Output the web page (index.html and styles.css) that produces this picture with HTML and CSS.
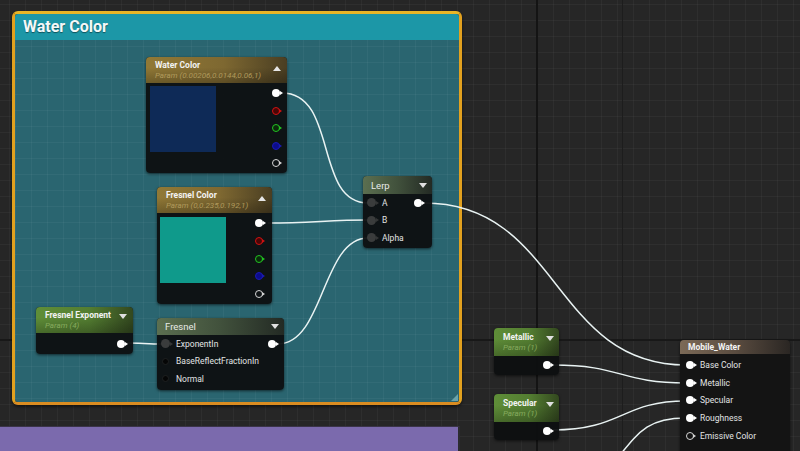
FILE: index.html
```html
<!DOCTYPE html>
<html>
<head>
<meta charset="utf-8">
<link rel="stylesheet" href="styles.css">
</head>
<body>
<div class="canvas">
  <div class="comment water-comment">
    <div class="comment-head">Water Color</div>
    <div class="comment-body"><span class="grip"></span></div>
  </div>
  <div class="comment purple-comment"></div>

  <svg class="wires" width="800" height="451" viewBox="0 0 800 451">
    <g fill="none" stroke="#e9f3f3" stroke-width="1.5">
      <path d="M282 93 C338 93 314 203 368 203"/>
      <path d="M268 223 C310 223 330 220 368 220"/>
      <path d="M278 344 C324 344 322 238 368 238"/>
      <path d="M127 343 C140 343 148 344 162 344"/>
      <path d="M424 203 C560 203 552 365 686 365"/>
      <path d="M553 365 C622 365 620 383 686 383"/>
      <path d="M553 430 C622 430 622 401 686 401"/>
      <path d="M620 455 C640 430 650 418 686 418"/>
    </g>
  </svg>

  <div class="node n-water">
    <div class="head head-gold tall">
      <div class="titles">
        <div class="title">Water Color</div>
        <div class="sub sub-gold">Param (0.00206,0.0144,0.06,1)</div>
      </div>
      <span class="tri up"></span>
    </div>
    <div class="body vec-body">
      <div class="swatch sw-blue"></div>
      <div class="pin-col">
        <span class="pin white"></span>
        <span class="pin red"></span>
        <span class="pin green"></span>
        <span class="pin blue"></span>
        <span class="pin grey"></span>
      </div>
    </div>
  </div>

  <div class="node n-fcolor">
    <div class="head head-gold tall">
      <div class="titles">
        <div class="title">Fresnel Color</div>
        <div class="sub sub-gold">Param (0,0.235,0.192,1)</div>
      </div>
      <span class="tri up"></span>
    </div>
    <div class="body vec-body">
      <div class="swatch sw-teal"></div>
      <div class="pin-col">
        <span class="pin white"></span>
        <span class="pin red"></span>
        <span class="pin green"></span>
        <span class="pin blue"></span>
        <span class="pin grey"></span>
      </div>
    </div>
  </div>

  <div class="node n-lerp">
    <div class="head head-func">
      <span class="fname">Lerp</span>
      <span class="tri down"></span>
    </div>
    <div class="body rows">
      <div class="row"><span class="pin in"></span><span class="label">A</span><span class="pin white out"></span></div>
      <div class="row"><span class="pin in"></span><span class="label">B</span></div>
      <div class="row"><span class="pin in"></span><span class="label">Alpha</span></div>
    </div>
  </div>

  <div class="node n-fexp">
    <div class="head head-green tall">
      <div class="titles">
        <div class="title">Fresnel Exponent</div>
        <div class="sub sub-green">Param (4)</div>
      </div>
      <span class="tri down"></span>
    </div>
    <div class="body out-body"><span class="pin white"></span></div>
  </div>

  <div class="node n-fresnel">
    <div class="head head-func">
      <span class="fname">Fresnel</span>
      <span class="tri down"></span>
    </div>
    <div class="body rows">
      <div class="row"><span class="pin in"></span><span class="label">ExponentIn</span><span class="pin white out"></span></div>
      <div class="row"><span class="pin dot"></span><span class="label">BaseReflectFractionIn</span></div>
      <div class="row"><span class="pin dot"></span><span class="label">Normal</span></div>
    </div>
  </div>

  <div class="node n-metal">
    <div class="head head-green taller">
      <div class="titles">
        <div class="title">Metallic</div>
        <div class="sub sub-green">Param (1)</div>
      </div>
      <span class="tri down"></span>
    </div>
    <div class="body out-body short"><span class="pin white"></span></div>
  </div>

  <div class="node n-spec">
    <div class="head head-green taller">
      <div class="titles">
        <div class="title">Specular</div>
        <div class="sub sub-green">Param (1)</div>
      </div>
      <span class="tri down"></span>
    </div>
    <div class="body out-body short"><span class="pin white"></span></div>
  </div>

  <div class="node n-result">
    <div class="head head-result">
      <span class="title">Mobile_Water</span>
    </div>
    <div class="body rows result-rows">
      <div class="row"><span class="pin white"></span><span class="label">Base Color</span></div>
      <div class="row"><span class="pin white"></span><span class="label">Metallic</span></div>
      <div class="row"><span class="pin white"></span><span class="label">Specular</span></div>
      <div class="row"><span class="pin white"></span><span class="label">Roughness</span></div>
      <div class="row"><span class="pin grey"></span><span class="label">Emissive Color</span></div>
    </div>
  </div>
</div>
</body>
</html>
```

FILE: styles.css
```css
html, body {
  margin: 0;
  padding: 0;
  background: #262626;
}
body {
  width: 800px;
  height: 451px;
  overflow: hidden;
  font-family: Roboto, "Noto Sans", "Liberation Sans", sans-serif;
}
.canvas {
  position: relative;
  width: 800px;
  height: 451px;
  overflow: hidden;
  background-color: #262626;
  background-image:
    linear-gradient(to right, transparent 536px, #141414 536px, #141414 538px, transparent 538px),
    linear-gradient(to bottom, transparent 339px, #181818 339px, #181818 341px, transparent 341px),
    linear-gradient(to right, transparent 622px, #1d1d1d 622px, #1d1d1d 623px, transparent 623px),
    linear-gradient(to right, rgba(255,255,255,0.035) 1px, transparent 1px),
    linear-gradient(to bottom, rgba(255,255,255,0.035) 1px, transparent 1px);
  background-size: 800px 451px, 800px 451px, 800px 451px, 16px 16px, 16px 16px;
  background-position: 0 0, 0 0, 0 0, 9px 0, 0 4px;
  background-repeat: no-repeat, no-repeat, no-repeat, repeat, repeat;
}

/* comments */
.comment {
  position: absolute;
  box-sizing: border-box;
}
.water-comment {
  left: 12px;
  top: 11px;
  width: 450px;
  height: 394px;
  border: 3px solid #e2a11f;
  border-top-color: #e8b526;
  border-bottom-color: #da8c21;
  border-radius: 6px;
  display: flex;
  flex-direction: column;
  box-shadow: 0 2px 3px rgba(0,0,0,0.5);
  overflow: hidden;
}
.comment-head {
  height: 26px;
  flex: none;
  background: #1c97a7;
  color: #f4f8f8;
  font-weight: 700;
  font-size: 16px;
  line-height: 26px;
  padding-left: 8px;
  text-shadow: 0 1px 1px rgba(0,0,0,0.45);
}
.comment-body {
  flex: 1;
  position: relative;
  background-color: #2a6570;
  background-image:
    linear-gradient(to right, rgba(255,255,255,0.04) 1px, transparent 1px),
    linear-gradient(to bottom, rgba(255,255,255,0.04) 1px, transparent 1px);
  background-size: 16px 16px;
  background-position: 0 0, 0 6px;
}
.grip {
  position: absolute;
  right: 1px;
  bottom: 1px;
  width: 0;
  height: 0;
  border-left: 7px solid transparent;
  border-bottom: 7px solid #6aa3aa;
}
.purple-comment {
  left: 0;
  top: 426px;
  width: 460px;
  height: 40px;
  background: #7b6aad;
  border-top: 1px solid #3a3448;
  border-right: 2px solid #2c2c30;
}

.wires {
  position: absolute;
  left: 0;
  top: 0;
}

/* nodes */
.node {
  position: absolute;
  box-sizing: border-box;
  border-radius: 4px;
  background: rgba(13, 15, 16, 0.95);
  box-shadow: 0 1px 3px rgba(0,0,0,0.6);
  display: flex;
  flex-direction: column;
}
.head {
  display: flex;
  justify-content: space-between;
  align-items: flex-start;
  border-radius: 4px 4px 0 0;
  box-sizing: border-box;
  flex: none;
}
.head.tall {
  height: 26px;
  padding: 3px 6px 0 9px;
}
.head.taller {
  height: 28px;
  padding: 4px 5px 0 9px;
}
.head-gold {
  background: linear-gradient(to bottom, rgba(0,0,0,0) 40%, rgba(0,0,0,0.25)),
              linear-gradient(to right, #917936 0%, #7e6831 55%, #4a3e22 100%);
}
.head-green {
  background: linear-gradient(to bottom, rgba(0,0,0,0) 40%, rgba(0,0,0,0.25)),
              linear-gradient(to right, #5f8e38 0%, #537d31 55%, #33481f 100%);
}
.head-func {
  height: 18px;
  padding: 0 5px 0 8px;
  align-items: center;
  background: linear-gradient(to right, #5b6f50 0%, #41513c 50%, #232a24 100%);
}
.head-result {
  height: 14px;
  padding: 0 8px;
  align-items: center;
  background: linear-gradient(to right, #7c6a57 0%, #5a4c40 50%, #2a2623 100%);
}
.titles {
  display: flex;
  flex-direction: column;
}
.title {
  font-weight: 700;
  font-size: 8.5px;
  line-height: 11px;
  color: #f3f3f3;
  white-space: nowrap;
}
.sub {
  font-size: 8px;
  line-height: 10px;
  font-style: italic;
  white-space: nowrap;
}
.sub-gold { color: #b09a5c; }
.sub-green { color: #86ab5e; }
.fname {
  font-size: 9.5px;
  color: #e8eae6;
}
.tri {
  width: 0;
  height: 0;
  border-left: 4px solid transparent;
  border-right: 4px solid transparent;
  flex: none;
}
.tri.up {
  border-bottom: 5px solid #e6e6e6;
  margin-top: 6px;
}
.tri.down {
  border-top: 5px solid #e0e0e0;
  margin-top: 4px;
}
.head-func .tri.down { margin-top: 0; }

.body {
  flex: 1;
  border-radius: 0 0 4px 4px;
}

/* vector param */
.vec-body {
  display: flex;
  justify-content: space-between;
  align-items: flex-start;
  padding: 3px 7px 0 4px;
}
.n-fcolor .vec-body { padding: 4px 9px 0 3px; }
.swatch {
  width: 66px;
  height: 66px;
}
.sw-blue { background: #0e2a57; }
.sw-teal { background: #0f9a8b; }
.pin-col {
  display: flex;
  flex-direction: column;
  gap: 9.5px;
  padding-top: 3px;
}
.n-fcolor .pin-col { padding-top: 2px; gap: 9.75px; }

/* pins */
.pin {
  position: relative;
  display: block;
  width: 8px;
  height: 8px;
  border-radius: 50%;
  box-sizing: border-box;
  flex: none;
}
.pin::after {
  content: "";
  position: absolute;
  left: 100%;
  top: 50%;
  margin-top: -2px;
  margin-left: 0;
  border-left: 3px solid currentColor;
  border-top: 2px solid transparent;
  border-bottom: 2px solid transparent;
}
.pin.white { background: #ffffff; color: #ffffff; }
.pin.red { background: #4a0606; border: 1.5px solid #d01212; color: #d01212; }
.pin.green { background: #0b2a0b; border: 1.5px solid #22c422; color: #22c422; }
.pin.blue { background: #0c0c8c; border: 1.5px solid #1a1ab4; color: #1a1ab4; }
.pin.grey { background: transparent; border: 1.5px solid #d6d6d6; color: #d6d6d6; }
.pin.in { width: 9px; height: 9px; background: #3a3c3c; color: #343636; }
.pin.dot { width: 7px; height: 7px; margin: 0 1px; background: #050606; border: 1px solid #1e2121; color: transparent; }
.pin.dot::after { display: none; }

/* rows */
.rows {
  display: flex;
  flex-direction: column;
}
.row {
  height: 17.5px;
  display: flex;
  align-items: center;
  gap: 6px;
}
.label {
  font-size: 8.5px;
  color: #e2e4e4;
  white-space: nowrap;
}
.pin.out { margin-left: auto; }

.out-body {
  display: flex;
  justify-content: flex-end;
  align-items: center;
  padding-right: 8px;
}

/* placement on canvas */
.n-water { left: 146px; top: 57px; width: 141px; height: 116px; }
.n-fcolor { left: 157px; top: 187px; width: 115px; height: 117px; }
.n-lerp { left: 363px; top: 176px; width: 69px; height: 72px; }
.n-lerp .rows { padding: 0 10px 0 4px; }
.n-fexp { left: 36px; top: 307px; width: 97px; height: 47px; }
.n-fresnel { left: 157px; top: 318px; width: 127px; height: 72px; }
.n-fresnel .head-func { height: 17px; }
.n-fresnel .rows { padding: 0 8px 0 4px; }
.n-metal { left: 494px; top: 328px; width: 65px; height: 47px; }
.n-spec { left: 494px; top: 394px; width: 65px; height: 46px; }
.n-metal .out-body, .n-spec .out-body { align-items: flex-start; padding-top: 5px; }
.n-result { left: 680px; top: 340px; width: 110px; height: 130px; background: #141414; }
.result-rows { padding: 2px 0 0 6px; }
.result-rows .row { height: 17.75px; }
```
